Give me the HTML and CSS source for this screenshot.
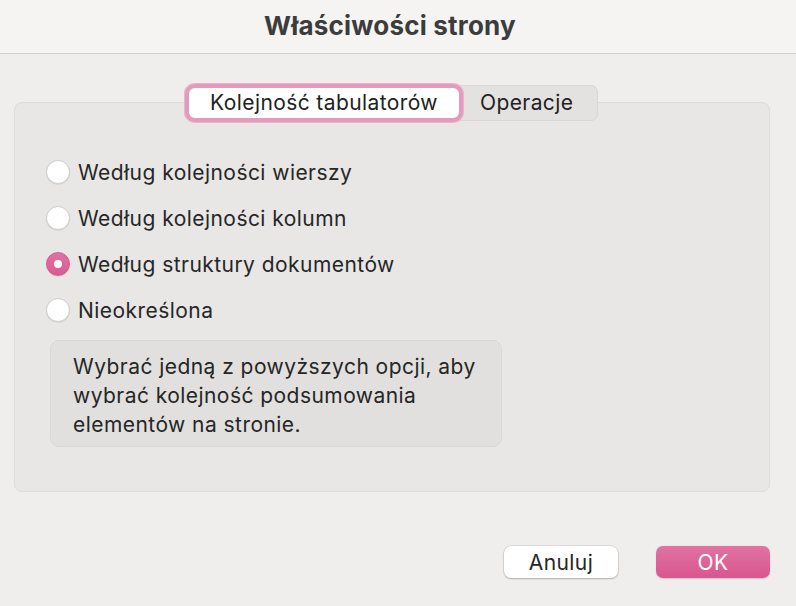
FILE: index.html
```html
<!DOCTYPE html>
<html lang="pl">
<head>
<meta charset="utf-8">
<title>Właściwości strony</title>
<link rel="stylesheet" href="styles.css">
</head>
<body>
<div class="window">
  <header class="titlebar"><h1 class="title">Właściwości strony</h1></header>
  <main class="content">
    <section class="panel">
      <div class="tabs">
        <div class="tab tab-active">Kolejność tabulatorów</div>
        <div class="tab">Operacje</div>
      </div>
      <ul class="radios">
        <li class="radio-row"><span class="radio"></span><span class="label">Według kolejności wierszy</span></li>
        <li class="radio-row"><span class="radio"></span><span class="label">Według kolejności kolumn</span></li>
        <li class="radio-row"><span class="radio radio-on"></span><span class="label">Według struktury dokumentów</span></li>
        <li class="radio-row"><span class="radio"></span><span class="label">Nieokreślona</span></li>
      </ul>
      <div class="info">Wybrać jedną z powyższych opcji, aby wybrać kolejność podsumowania elementów na stronie.</div>
    </section>
    <div class="buttons">
      <button class="btn btn-cancel">Anuluj</button>
      <button class="btn btn-ok">OK</button>
    </div>
  </main>
</div>
</body>
</html>
```
FILE: styles.css
```css
* { box-sizing: border-box; }
html, body {
  margin: 0;
  padding: 0;
  width: 796px;
  height: 606px;
  overflow: hidden;
  background: #efeeec;
  font-family: Inter, "Noto Sans", "Liberation Sans", sans-serif;
  color: #262626;
}
.window { width: 796px; height: 606px; display: flex; flex-direction: column; }
.titlebar {
  height: 54px;
  background: #f5f4f2;
  border-bottom: 1px solid #d3d2d0;
  display: flex;
  align-items: center;
  justify-content: center;
  flex-shrink: 0;
  padding: 0 16px 2px 0;
}
.title {
  margin: 0;
  font-size: 26px;
  font-weight: 700;
  color: #3c3c3c;
  letter-spacing: 0.2px;
}
.content { padding: 48px 26px 0 14px; }
.panel {
  background: #e8e7e5;
  border: 1px solid #dddcda;
  border-radius: 8px;
  height: 390px;
  padding: 0 0 0 31px;
}
.tabs {
  margin: -18px 0 0 138px;
  width: 414px;
  height: 36px;
  display: flex;
  align-items: center;
  background: #e3e2e0;
  border: 1px solid #d8d7d5;
  border-radius: 7px;
}
.tab {
  font-size: 21px;
  letter-spacing: 0.4px;
  line-height: 30px;
  padding: 0 0 0 21px;
  color: #222;
}
.tab-active {
  background: #fff;
  border-radius: 6px;
  height: 30px;
  width: 270px;
  padding: 0;
  text-align: center;
  margin-left: 4px;
  box-shadow: 0 0 0 4px #e49bbb, 0 0 0 5px #eab3cb;
}
.radios { list-style: none; margin: 28px 0 0 0; padding: 0; }
.radio-row { height: 46px; display: flex; align-items: center; }
.radio {
  width: 24px;
  height: 24px;
  border-radius: 50%;
  background: #fff;
  border: 1px solid #cfcecc;
  box-shadow: 0 0.5px 1px rgba(0,0,0,0.12);
  margin-right: 8px;
  flex-shrink: 0;
  display: flex;
  align-items: center;
  justify-content: center;
}
.radio-on {
  background: linear-gradient(#e173a3, #d95a93);
  border-color: #d65990;
}
.radio-on::after {
  content: "";
  width: 8px;
  height: 8px;
  border-radius: 50%;
  background: #fff;
}
.label { font-size: 21px; letter-spacing: 0.45px; color: #262626; }
.info {
  margin: 7px 0 0 4px;
  width: 452px;
  height: 107px;
  background: #e1e0de;
  border: 1px solid #d9d8d6;
  border-radius: 9px;
  padding: 11px 14px 0 22px;
  font-size: 21px;
  line-height: 29px;
  letter-spacing: 0.45px;
  color: #262626;
}
.buttons {
  display: flex;
  justify-content: flex-end;
  gap: 38px;
  margin-top: 54px;
}
.btn {
  width: 114px;
  height: 32px;
  border-radius: 7px;
  font-family: inherit;
  font-size: 21px;
  letter-spacing: 0.4px;
  border: none;
  padding: 0;
}
.btn-cancel {
  background: #fff;
  color: #262626;
  box-shadow: 0 0 0 0.5px rgba(0,0,0,0.15), 0 1px 2px rgba(0,0,0,0.2);
}
.btn-ok {
  background: linear-gradient(#e073a2, #d9558f);
  color: #fff;
  box-shadow: 0 0.5px 1.5px rgba(0,0,0,0.15);
}
```
